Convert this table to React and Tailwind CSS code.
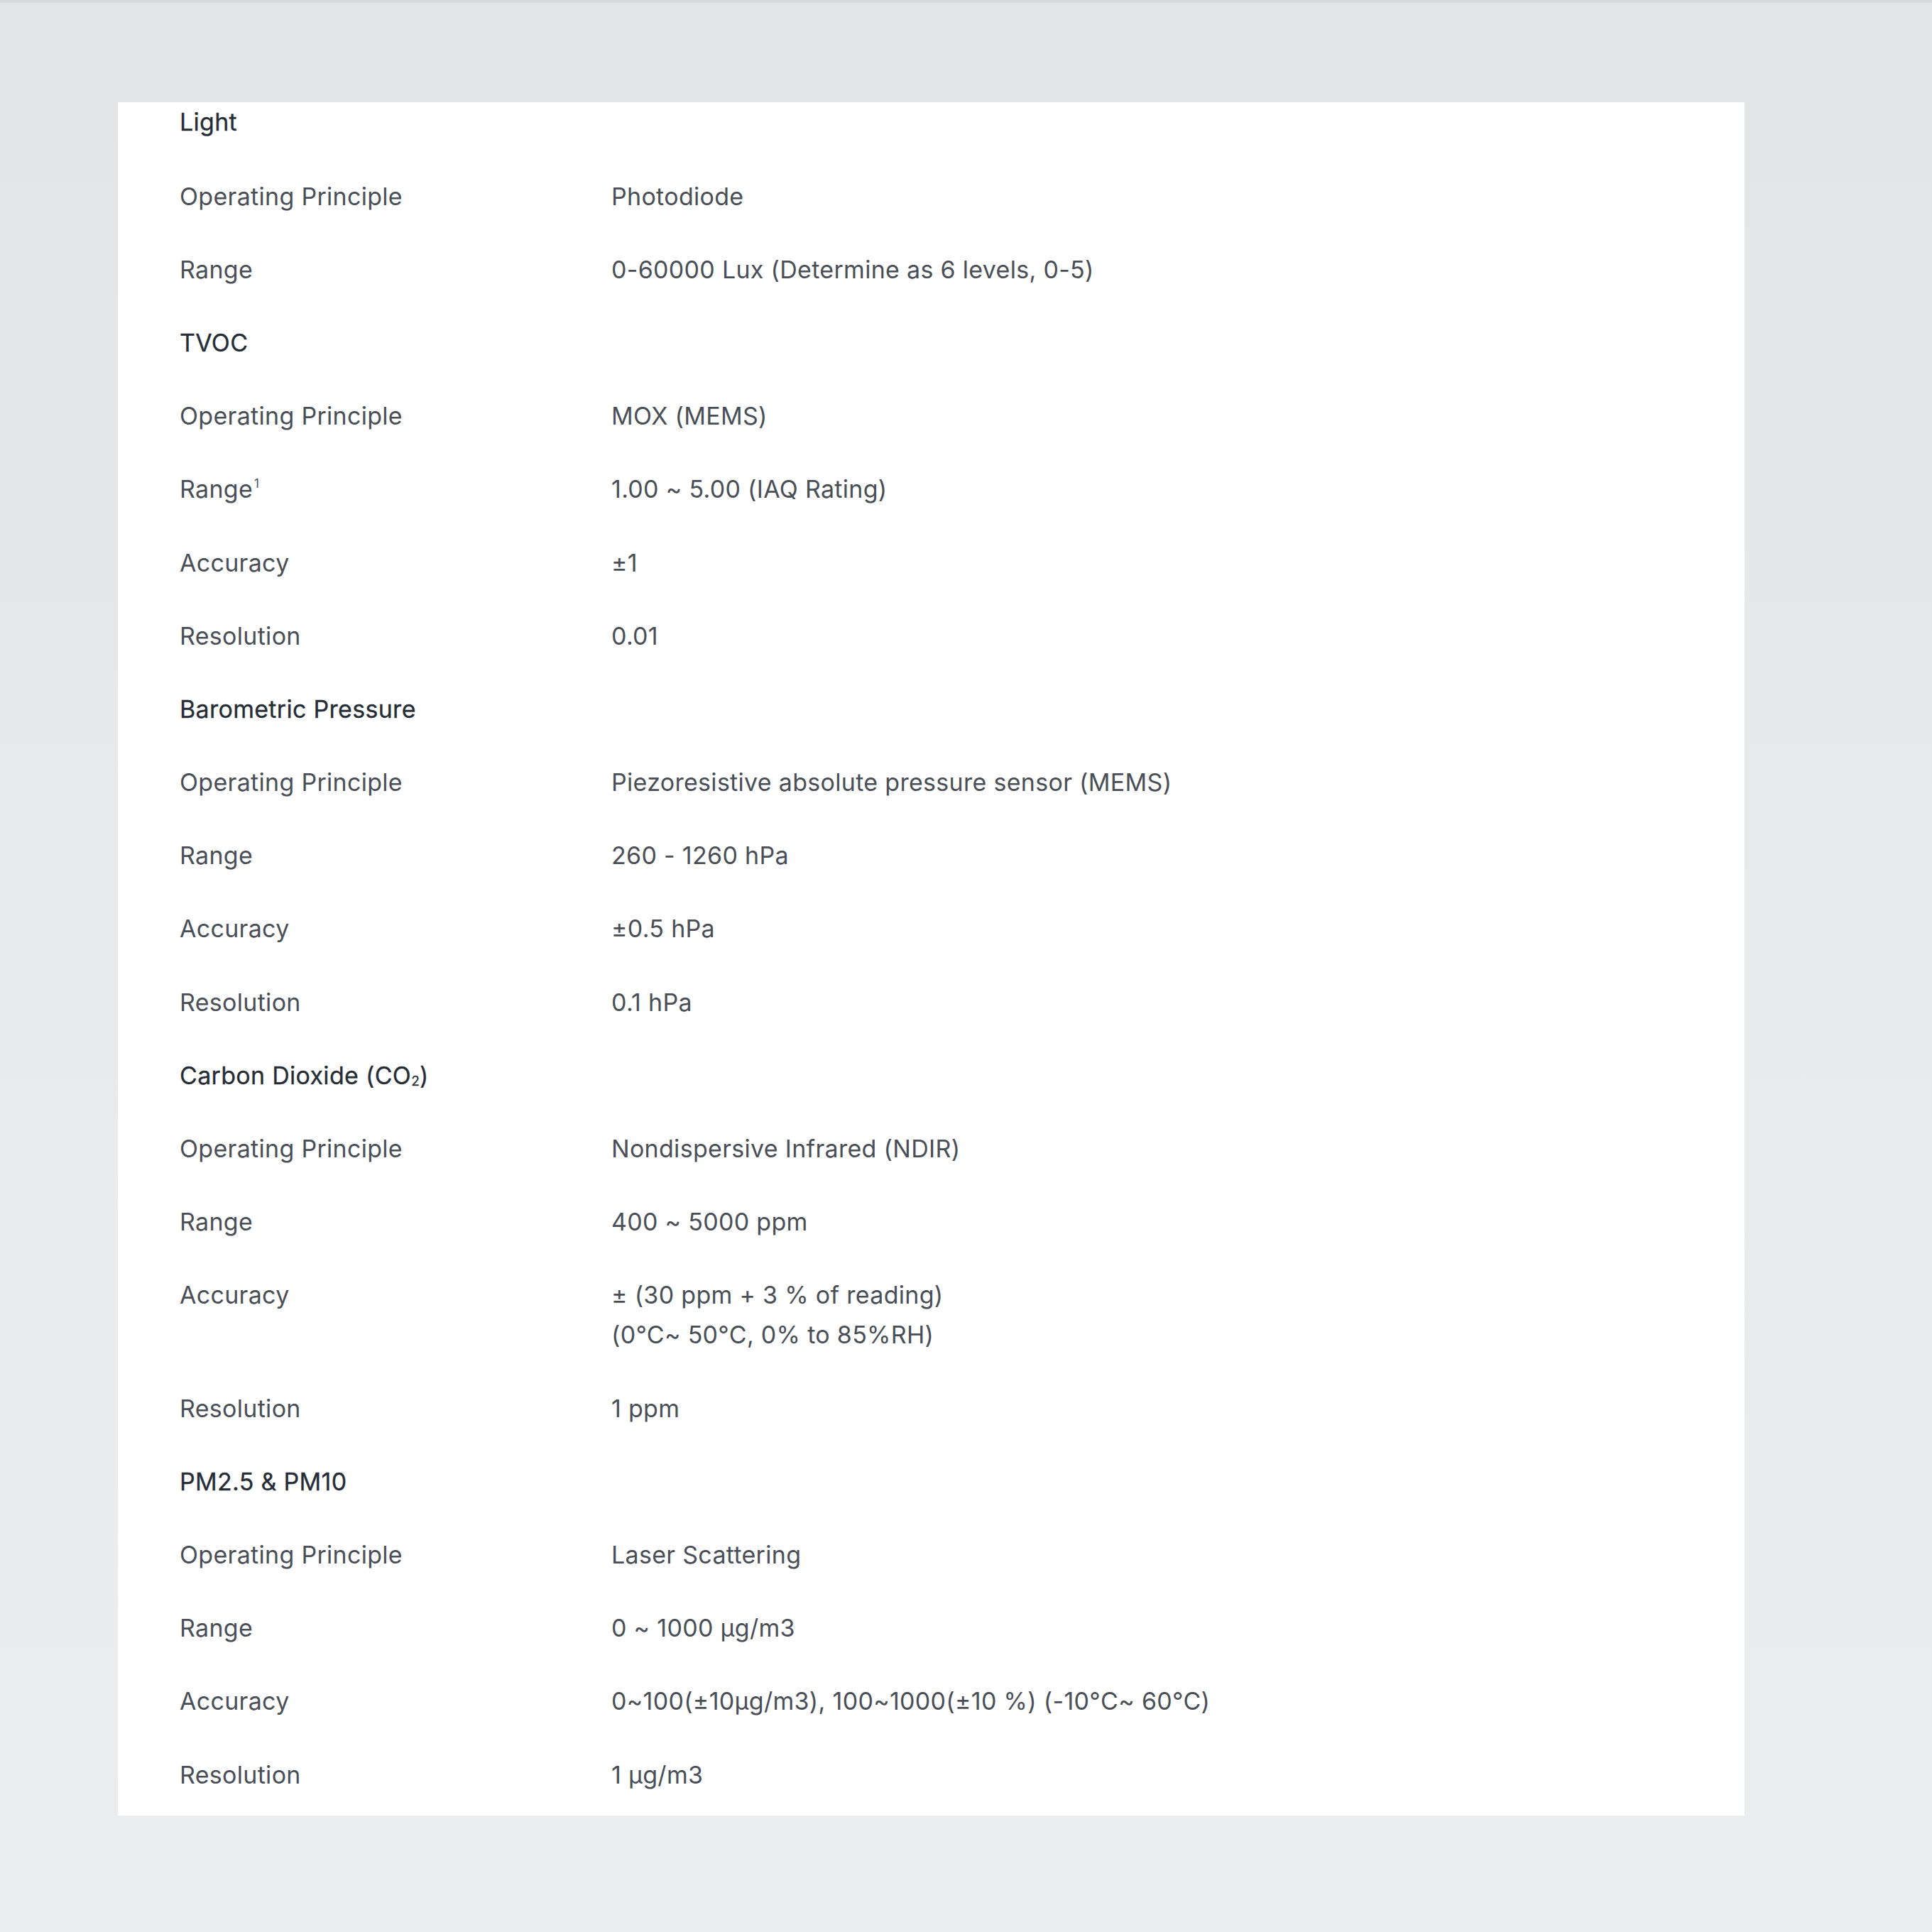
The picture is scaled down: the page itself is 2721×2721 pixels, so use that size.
import React from 'react'

const sections = [
  {
    title: 'Light',
    rows: [
      ['Operating Principle', 'Photodiode'],
      ['Range', '0-60000 Lux (Determine as 6 levels, 0-5)'],
    ],
  },
  {
    title: 'TVOC',
    rows: [
      ['Operating Principle', 'MOX (MEMS)'],
      ['Range', '1.00 ~ 5.00 (IAQ Rating)', true],
      ['Accuracy', '±1'],
      ['Resolution', '0.01'],
    ],
  },
  {
    title: 'Barometric Pressure',
    rows: [
      ['Operating Principle', 'Piezoresistive absolute pressure sensor (MEMS)'],
      ['Range', '260 - 1260 hPa'],
      ['Accuracy', '±0.5 hPa'],
      ['Resolution', '0.1 hPa'],
    ],
  },
  {
    title: 'co2',
    rows: [
      ['Operating Principle', 'Nondispersive Infrared (NDIR)'],
      ['Range', '400 ~ 5000 ppm'],
      ['Accuracy', ['± (30 ppm + 3 % of reading)', '(0°C~ 50°C, 0% to 85%RH)']],
      ['Resolution', '1 ppm'],
    ],
  },
  {
    title: 'PM2.5 & PM10',
    rows: [
      ['Operating Principle', 'Laser Scattering'],
      ['Range', '0 ~ 1000 μg/m3'],
      ['Accuracy', '0~100(±10μg/m3), 100~1000(±10 %) (-10°C~ 60°C)'],
      ['Resolution', '1 μg/m3'],
    ],
  },
]

const Heading = ({ title, first }) => (
  <div className={`${first ? 'h-[81px] -mt-[2px]' : 'h-[103.2px] pt-[23.6px]'} pb-[23.6px] leading-[56px] text-[34px] font-normal text-[#262d35] [-webkit-text-stroke:0.3px_#262d35]`}>
    {title === 'co2' ? (
      <span>
        Carbon Dioxide (CO<span className="inline-block leading-none text-[19px] relative top-[2px]">2</span>)
      </span>
    ) : (
      title
    )}
  </div>
)

const Row = ({ label, value, note }) => (
  <div className="grid grid-cols-[608px_1fr] py-[23.6px] leading-[56px] text-[34px] text-[#4a4f57]">
    <div>
      {label}
      {note && <span className="inline-block leading-none text-[17px] relative -top-[14px] ml-[2px]">1</span>}
    </div>
    <div>
      {Array.isArray(value) ? value.map((v, i) => <div key={i}>{v}</div>) : value}
    </div>
  </div>
)

const App = () => {
  return (
    <div
      className="min-h-[2721px] w-full border-t-[4px] border-t-[#d8d9da] bg-gradient-to-b from-[#e3e4e5] via-[#e9eaeb] to-[#ecedee] pt-[142px]"
      style={{ fontFamily: 'Inter, "Noto Sans", sans-serif' }}
    >
      <div className="ml-[166px] w-[2291px] bg-white pl-[87px] pb-[6px] tracking-[0.3px]">
        {sections.map((s, si) => (
          <div key={si}>
            <Heading title={s.title} first={si === 0} />
            {s.rows.map((r, ri) => (
              <Row key={ri} label={r[0]} value={r[1]} note={r[2]} />
            ))}
          </div>
        ))}
      </div>
    </div>
  )
}

export default App
